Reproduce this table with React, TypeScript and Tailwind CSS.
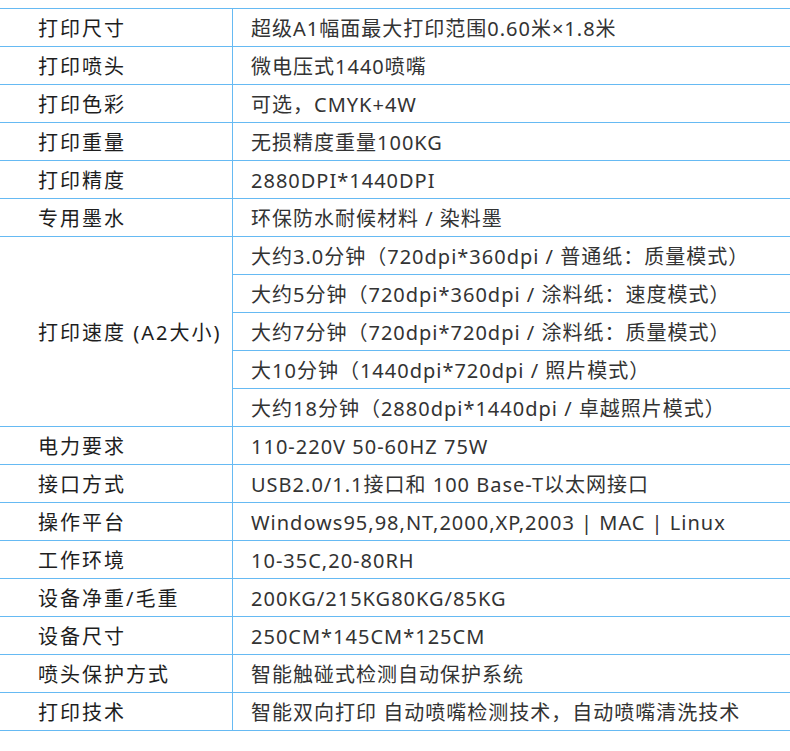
import React from "react";

const rowsTop: [string, string][] = [
  ["打印尺寸", "超级A1幅面最大打印范围0.60米×1.8米"],
  ["打印喷头", "微电压式1440喷嘴"],
  ["打印色彩", "可选，CMYK+4W"],
  ["打印重量", "无损精度重量100KG"],
  ["打印精度", "2880DPI*1440DPI"],
  ["专用墨水", "环保防水耐候材料 / 染料墨"],
];

const speed: string[] = [
  "大约3.0分钟（720dpi*360dpi / 普通纸：质量模式）",
  "大约5分钟（720dpi*360dpi / 涂料纸：速度模式）",
  "大约7分钟（720dpi*720dpi / 涂料纸：质量模式）",
  "大10分钟（1440dpi*720dpi / 照片模式）",
  "大约18分钟（2880dpi*1440dpi / 卓越照片模式）",
];

const rowsBottom: [string, string][] = [
  ["电力要求", "110-220V 50-60HZ 75W"],
  ["接口方式", "USB2.0/1.1接口和 100 Base-T以太网接口"],
  ["操作平台", "Windows95,98,NT,2000,XP,2003 | MAC | Linux"],
  ["工作环境", "10-35C,20-80RH"],
  ["设备净重/毛重", "200KG/215KG80KG/85KG"],
  ["设备尺寸", "250CM*145CM*125CM"],
  ["喷头保护方式", "智能触碰式检测自动保护系统"],
  ["打印技术", "智能双向打印 自动喷嘴检测技术，自动喷嘴清洗技术"],
];

function Row({ label, value }: { label: string; value: string }) {
  return (
    <div className="flex h-[38px] border-b border-[#66baf3]">
      <div className="w-[233px] shrink-0 border-r border-[#66baf3] pl-[38px] pt-[3px] flex items-center text-[20px] tracking-[2px] text-[#1e1e1e]">
        {label}
      </div>
      <div className="flex-1 pl-[18px] pt-[3px] flex items-center text-[20px] tracking-[1px] text-[#333333]">
        {value}
      </div>
    </div>
  );
}

export default function App() {
  return (
    <div
      className="w-[790px] h-[751px] bg-white pt-[8px] whitespace-nowrap leading-none"
      style={{ fontFamily: '"Noto Sans", "Noto Sans CJK SC", sans-serif' }}
    >
      <div className="border-t border-[#66baf3]">
        {rowsTop.map(([l, v]) => (
          <Row key={l} label={l} value={v} />
        ))}
        <div className="flex border-b border-[#66baf3]">
          <div className="w-[233px] shrink-0 border-r border-[#66baf3] pl-[38px] pt-[3px] flex items-center text-[20px] tracking-[2px] text-[#1e1e1e]">
            打印速度 (A2大小)
          </div>
          <div className="flex-1 flex flex-col">
            {speed.map((s, i) => (
              <div
                key={s}
                className={
                  i < speed.length - 1
                    ? "h-[38px] border-b border-[#66baf3] pl-[18px] pt-[3px] flex items-center text-[20px] tracking-[1px] text-[#333333]"
                    : "h-[37px] pl-[18px] pt-[3px] flex items-center text-[20px] tracking-[1px] text-[#333333]"
                }
              >
                {s}
              </div>
            ))}
          </div>
        </div>
        {rowsBottom.map(([l, v]) => (
          <Row key={l} label={l} value={v} />
        ))}
      </div>
    </div>
  );
}
